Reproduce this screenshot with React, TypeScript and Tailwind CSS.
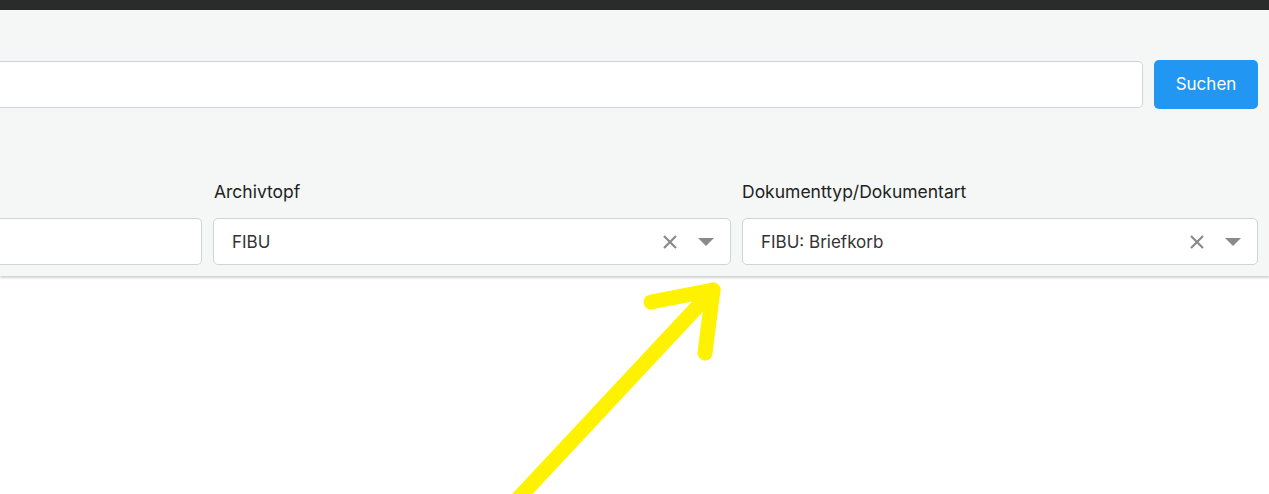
import React from "react";

function XIcon() {
  return (
    <svg width="16" height="16" viewBox="0 0 16 16" className="shrink-0">
      <path d="M2 2 L14 14 M14 2 L2 14" stroke="#8a8a8a" strokeWidth="2.2" strokeLinecap="butt" />
    </svg>
  );
}

function Caret() {
  return (
    <svg width="16" height="8" viewBox="0 0 16 8" className="shrink-0">
      <path d="M0 0 L16 0 L8 8 Z" fill="#8a8a8a" />
    </svg>
  );
}

function SelectBox({ value, clearable = true, cutLeft = false }: { value: string; clearable?: boolean; cutLeft?: boolean }) {
  return (
    <div
      className={
        "flex h-[47px] items-center border border-[#cfd4d9] bg-white " +
        (cutLeft ? "rounded-r-[5px] border-l-0" : "rounded-[5px] pl-[18px] pr-[16px]")
      }
    >
      <span className="flex-1 pt-[2px] text-[17px] text-[#333]">{value}</span>
      {clearable && (
        <div className="flex items-center gap-[20px]">
          <XIcon />
          <Caret />
        </div>
      )}
    </div>
  );
}

export default function App() {
  return (
    <div
      className="relative h-[494px] w-[1269px] overflow-hidden bg-white"
      style={{ fontFamily: 'Inter, "Liberation Sans", Arial, sans-serif' }}
    >
      <div className="h-[10px] bg-[#2b2b2b]" />
      <div className="bg-[#f5f7f6] pr-[11px] pt-[50px] pb-[11px] shadow-[0_2px_2px_rgba(0,0,0,0.18)]">
        <div className="flex items-center gap-[11px]">
          <div className="h-[47px] flex-1 rounded-r-[5px] border border-l-0 border-[#cfd4d9] bg-white" />
          <button className="h-[49px] w-[104px] rounded-[5px] bg-[#2196f3] text-[17px] text-white">
            Suchen
          </button>
        </div>
        <div className="mt-[70px] flex gap-[11px]">
          <div className="flex w-[202px] flex-col">
            <div className="h-[26px]" />
            <div className="mt-[13px]">
              <SelectBox value="" clearable={false} cutLeft />
            </div>
          </div>
          <div className="flex w-[518px] flex-col">
            <div className="h-[26px] pl-[1px] text-[17.5px] leading-[26px] text-[#222]">Archivtopf</div>
            <div className="mt-[13px]">
              <SelectBox value="FIBU" />
            </div>
          </div>
          <div className="flex flex-1 flex-col">
            <div className="h-[26px] text-[17.5px] leading-[26px] text-[#222]">Dokumenttyp/Dokumentart</div>
            <div className="mt-[13px]">
              <SelectBox value="FIBU: Briefkorb" />
            </div>
          </div>
        </div>
      </div>
      <svg
        className="pointer-events-none absolute left-0 top-0"
        width="1269"
        height="494"
        viewBox="0 0 1269 494"
      >
        <g stroke="#fff200" strokeWidth="15" strokeLinecap="round" strokeLinejoin="round" fill="none">
          <path d="M713 290 L470 550" />
          <path d="M651 302 L713 290 L705 353" />
        </g>
      </svg>
    </div>
  );
}
